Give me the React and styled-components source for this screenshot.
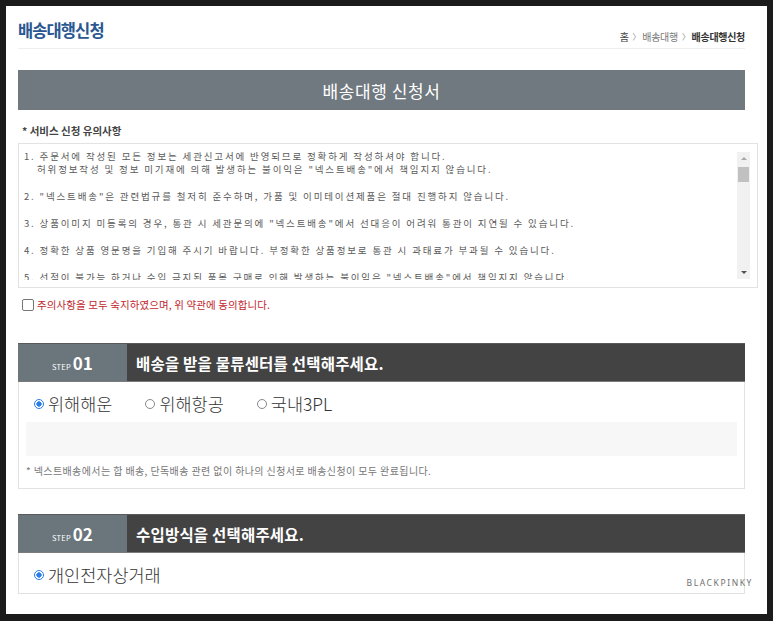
import styled, { createGlobalStyle } from "styled-components";

const GlobalStyle = createGlobalStyle`
  html, body {
    margin: 0;
    padding: 0;
    background: #1b1b1b;
  }
  body {
    font-family: "Noto Sans CJK KR", "Noto Sans", sans-serif;
    color: #333;
  }
`;

const notices = [
  [
    "1. 주문서에 작성된 모든 정보는 세관신고서에 반영되므로 정확하게 작성하셔야 합니다.",
    "허위정보작성 및 정보 미기재에 의해 발생하는 불이익은 \"넥스트배송\"에서 책임지지 않습니다.",
  ],
  ["2. \"넥스트배송\"은 관련법규를 철저히 준수하며, 가품 및 이미테이션제품은 절대 진행하지 않습니다."],
  ["3. 상품이미지 미등록의 경우, 통관 시 세관문의에 \"넥스트배송\"에서 선대응이 어려워 통관이 지연될 수 있습니다."],
  ["4. 정확한 상품 영문명을 기입해 주시기 바랍니다. 부정확한 상품정보로 통관 시 과태료가 부과될 수 있습니다."],
  ["5. 선적이 불가능 하거나 수입 금지된 품목 구매로 인해 발생하는 불이익은 \"넥스트배송\"에서 책임지지 않습니다."],
];

const centers = ["위해해운", "위해항공", "국내3PL"];

const App = () => {
  return (
    <>
      <GlobalStyle />
      <Frame>
        <Panel>
          <TitleRow>
            <PageTitle>배송대행신청</PageTitle>
            <Breadcrumb>
              <Crumb>홈</Crumb>
              <Sep>〉</Sep>
              <Crumb>배송대행</Crumb>
              <Sep>〉</Sep>
              <Crumb $current>배송대행신청</Crumb>
            </Breadcrumb>
          </TitleRow>

          <FormBar>배송대행 신청서</FormBar>

          <NoticeLabel>* 서비스 신청 유의사항</NoticeLabel>
          <NoticeBox>
            <NoticeText>
              {notices.map((item, i) => (
                <NoticeItem key={i}>
                  {item.map((line, j) => (
                    <NoticeLine key={j} $indent={j > 0}>
                      {line}
                    </NoticeLine>
                  ))}
                </NoticeItem>
              ))}
            </NoticeText>
            <ScrollBar>
              <ArrowBtn>
                <Arrow $dir="up" />
              </ArrowBtn>
              <Track>
                <Thumb />
              </Track>
              <ArrowBtn>
                <Arrow $dir="down" />
              </ArrowBtn>
            </ScrollBar>
          </NoticeBox>

          <AgreeRow>
            <CheckBox type="checkbox" />
            <AgreeText>주의사항을 모두 숙지하였으며, 위 약관에 동의합니다.</AgreeText>
          </AgreeRow>

          <Step>
            <StepHead>
              <StepNo>
                <small>STEP</small>01
              </StepNo>
              <StepTitle>배송을 받을 물류센터를 선택해주세요.</StepTitle>
            </StepHead>
            <StepBody>
              <RadioRow>
                {centers.map((name, i) => (
                  <RadioLabel key={name}>
                    <Radio
                      type="radio"
                      name="center"
                      defaultChecked={i === 0}
                    />
                    {name}
                  </RadioLabel>
                ))}
              </RadioRow>
              <GrayBox />
              <StepNote>
                * 넥스트배송에서는 합 배송, 단독배송 관련 없이 하나의 신청서로 배송신청이 모두 완료됩니다.
              </StepNote>
            </StepBody>
          </Step>

          <Step $gap>
            <StepHead>
              <StepNo>
                <small>STEP</small>02
              </StepNo>
              <StepTitle>수입방식을 선택해주세요.</StepTitle>
            </StepHead>
            <StepBody $compact>
              <RadioRow>
                <RadioLabel>
                  <Radio type="radio" name="import" defaultChecked />
                  개인전자상거래
                </RadioLabel>
              </RadioRow>
            </StepBody>
          </Step>

          <Watermark>BLACKPINKY</Watermark>
        </Panel>
      </Frame>
    </>
  );
};

const Frame = styled.div`
  padding: 6px 6px 7px 6px;
  height: 621px;
  box-sizing: border-box;
`;

const Panel = styled.div`
  position: relative;
  background: #fff;
  height: 608px;
  padding: 0 22px 0 12px;
  box-sizing: border-box;
  overflow: hidden;
`;

const TitleRow = styled.div`
  display: flex;
  justify-content: space-between;
  align-items: flex-start;
  padding-top: 14px;
  padding-bottom: 4px;
  border-bottom: 1px solid #eeeeee;
`;

const PageTitle = styled.h1`
  margin: 0;
  font-size: 16.5px;
  line-height: 20px;
  font-weight: 700;
  letter-spacing: -0.9px;
  color: #2a5791;
`;

const Breadcrumb = styled.div`
  display: flex;
  align-items: center;
  margin-top: 10px;
  font-size: 10px;
  line-height: 14px;
  letter-spacing: -0.3px;
`;

const Crumb = styled.span`
  color: ${(p) => (p.$current ? "#333" : "#777")};
  font-weight: ${(p) => (p.$current ? 700 : 400)};
  &:first-child {
    color: #444;
  }
`;

const Sep = styled.span`
  color: #888;
  font-size: 8px;
  margin: 0 2px 0 4px;
`;

const FormBar = styled.div`
  margin-top: 21px;
  height: 40px;
  background: #6f797f;
  color: #fff;
  font-size: 17px;
  display: flex;
  align-items: center;
  justify-content: center;
  letter-spacing: 0.6px;
`;

const NoticeLabel = styled.div`
  margin-top: 14px;
  padding-left: 4px;
  font-size: 10.5px;
  line-height: 14px;
  font-weight: 700;
  color: #444;
`;

const NoticeBox = styled.div`
  display: flex;
  gap: 6px;
  margin-top: 5px;
  margin-right: -13px;
  border: 1px solid #e2e2e2;
  padding: 6px 7px 7px 5px;
`;

const NoticeText = styled.div`
  flex: 1;
  height: 130px;
  overflow: hidden;
  font-size: 9.5px;
  line-height: 13.4px;
  letter-spacing: 1.85px;
  color: #5a5a5a;
`;

const NoticeItem = styled.div`
  margin-bottom: 13.4px;
`;

const NoticeLine = styled.div`
  white-space: nowrap;
  padding-left: ${(p) => (p.$indent ? "13px" : "0")};
`;

const ScrollBar = styled.div`
  width: 13px;
  flex-shrink: 0;
  margin-top: 2px;
  height: 127px;
  background: #f1f1f1;
  display: flex;
  flex-direction: column;
`;

const ArrowBtn = styled.div`
  height: 13px;
  display: flex;
  align-items: center;
  justify-content: center;
`;

const Arrow = styled.span`
  width: 0;
  height: 0;
  border-left: 3px solid transparent;
  border-right: 3px solid transparent;
  ${(p) =>
    p.$dir === "up"
      ? "border-bottom: 3px solid #a8a8a8;"
      : "border-top: 3px solid #505050;"}
`;

const Track = styled.div`
  flex: 1;
  padding: 2px 1px 0;
`;

const Thumb = styled.div`
  height: 15px;
  background: #c1c1c1;
`;

const AgreeRow = styled.label`
  display: flex;
  align-items: center;
  gap: 3px;
  margin-top: 10px;
  padding-left: 4px;
  height: 14px;
`;

const CheckBox = styled.input`
  appearance: none;
  margin: 0;
  width: 12px;
  height: 12px;
  border: 1px solid #777;
  border-radius: 2px;
  background: #fff;
  box-sizing: border-box;
`;

const AgreeText = styled.span`
  font-size: 10.5px;
  line-height: 14px;
  letter-spacing: 0.1px;
  color: #c0282d;
`;

const Step = styled.section`
  margin-top: ${(p) => (p.$gap ? "25px" : "31px")};
`;

const StepHead = styled.div`
  display: flex;
  height: 39px;
  background: #434343;
  border-top: 1px solid #5a5a5a;
  border-bottom: 1px solid #7b7b7b;
  box-sizing: border-box;
`;

const StepNo = styled.div`
  width: 109px;
  flex-shrink: 0;
  background: #6b767c;
  color: #fff;
  display: flex;
  align-items: baseline;
  justify-content: center;
  padding-top: 6px;
  box-sizing: border-box;
  font-size: 17px;
  font-weight: 700;
  small {
    font-size: 7.5px;
    font-weight: 400;
    margin-right: 2px;
    letter-spacing: 0.2px;
  }
`;

const StepTitle = styled.div`
  display: flex;
  align-items: center;
  padding-left: 9px;
  color: #fff;
  font-size: 15.5px;
  font-weight: 700;
  letter-spacing: 0.2px;
`;

const StepBody = styled.div`
  border: 1px solid #e2e2e2;
  border-top: none;
  padding: 10px 7px ${(p) => (p.$compact ? "6px" : "10px")};
`;

const RadioRow = styled.div`
  display: flex;
  align-items: center;
  gap: 33px;
  padding-left: 8px;
  height: 24px;
`;

const RadioLabel = styled.label`
  display: flex;
  align-items: center;
  gap: 4px;
  font-size: 17.5px;
  font-weight: 300;
  color: #333;
  line-height: 24px;
`;

const Radio = styled.input`
  appearance: none;
  margin: 0;
  width: 10px;
  height: 10px;
  border-radius: 50%;
  border: 1px solid #888;
  box-sizing: border-box;
  background: #fff;
  &:checked {
    border-color: #2b7de9;
    background: radial-gradient(circle, #2b7de9 0 2.4px, #fff 2.9px);
  }
`;

const GrayBox = styled.div`
  margin-top: 6px;
  height: 34px;
  background: #f7f7f7;
`;

const StepNote = styled.p`
  margin: 8px 0 0;
  font-size: 10px;
  line-height: 14px;
  letter-spacing: 0.4px;
  color: #777;
`;

const Watermark = styled.div`
  position: absolute;
  right: 14px;
  top: 571px;
  font-family: "Noto Sans", sans-serif;
  font-size: 8.5px;
  letter-spacing: 1.6px;
  color: #6f6f6f;
`;

export default App;
